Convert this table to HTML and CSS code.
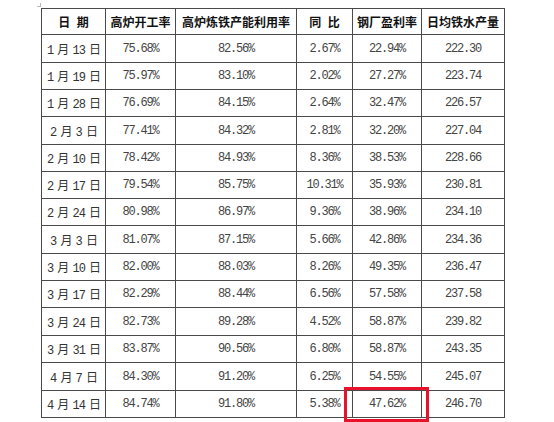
FILE: index.html
```html
<!DOCTYPE html>
<html lang="zh-CN">
<head>
<meta charset="utf-8">
<title>高炉数据</title>
<link rel="stylesheet" href="styles.css">
</head>
<body>
<div class="page">
  <div class="sheet">
    <div class="grid">
      <div class="c h sp">日 期</div><div class="c h">高炉开工率</div><div class="c h">高炉炼铁产能利用率</div><div class="c h sp">同 比</div><div class="c h">钢厂盈利率</div><div class="c h">日均铁水产量</div>

      <div class="c d">1 月 13 日</div><div class="c n">75.68%</div><div class="c n">82.56%</div><div class="c n">2.67%</div><div class="c n">22.94%</div><div class="c n">222.30</div>
      <div class="c d">1 月 19 日</div><div class="c n">75.97%</div><div class="c n">83.10%</div><div class="c n">2.02%</div><div class="c n">27.27%</div><div class="c n">223.74</div>
      <div class="c d">1 月 28 日</div><div class="c n">76.69%</div><div class="c n">84.15%</div><div class="c n">2.64%</div><div class="c n">32.47%</div><div class="c n">226.57</div>
      <div class="c d">2 月 3 日</div><div class="c n">77.41%</div><div class="c n">84.32%</div><div class="c n">2.81%</div><div class="c n">32.20%</div><div class="c n">227.04</div>
      <div class="c d">2 月 10 日</div><div class="c n">78.42%</div><div class="c n">84.93%</div><div class="c n">8.36%</div><div class="c n">38.53%</div><div class="c n">228.66</div>
      <div class="c d">2 月 17 日</div><div class="c n">79.54%</div><div class="c n">85.75%</div><div class="c n">10.31%</div><div class="c n">35.93%</div><div class="c n">230.81</div>
      <div class="c d">2 月 24 日</div><div class="c n">80.98%</div><div class="c n">86.97%</div><div class="c n">9.36%</div><div class="c n">38.96%</div><div class="c n">234.10</div>
      <div class="c d">3 月 3 日</div><div class="c n">81.07%</div><div class="c n">87.15%</div><div class="c n">5.66%</div><div class="c n">42.86%</div><div class="c n">234.36</div>
      <div class="c d">3 月 10 日</div><div class="c n">82.00%</div><div class="c n">88.03%</div><div class="c n">8.26%</div><div class="c n">49.35%</div><div class="c n">236.47</div>
      <div class="c d">3 月 17 日</div><div class="c n">82.29%</div><div class="c n">88.44%</div><div class="c n">6.56%</div><div class="c n">57.58%</div><div class="c n">237.58</div>
      <div class="c d">3 月 24 日</div><div class="c n">82.73%</div><div class="c n">89.28%</div><div class="c n">4.52%</div><div class="c n">58.87%</div><div class="c n">239.82</div>
      <div class="c d">3 月 31 日</div><div class="c n">83.87%</div><div class="c n">90.56%</div><div class="c n">6.80%</div><div class="c n">58.87%</div><div class="c n">243.35</div>
      <div class="c d">4 月 7 日</div><div class="c n">84.30%</div><div class="c n">91.20%</div><div class="c n">6.25%</div><div class="c n">54.55%</div><div class="c n">245.07</div>
      <div class="c d">4 月 14 日</div><div class="c n">84.74%</div><div class="c n">91.80%</div><div class="c n">5.38%</div><div class="c n mark">47.62%</div><div class="c n">246.70</div>
    </div>
  </div>
</div>
</body>
</html>
```

FILE: styles.css
```css
html, body {
  margin: 0;
  padding: 0;
  background: #ffffff;
}

.page {
  width: 554px;
  height: 422px;
  overflow: hidden;
  padding: 8px 0 0 41px;
  box-sizing: border-box;
}

.sheet {
  position: relative;
  display: inline-block;
}

.sheet::before {
  content: "";
  position: absolute;
  left: -4px;
  top: -5px;
  width: 3px;
  height: 3px;
  border-right: 1px solid #bbbbbb;
  border-bottom: 1px solid #bbbbbb;
}

.grid {
  display: grid;
  grid-template-columns: 63px 69px 120px 55px 68px 82px;
  grid-template-rows: 25px 27px 26px 26px 27px 26px 26px 26px 27px 26px 26px 27px 26px 27px 26px;
  gap: 1px;
  padding: 1px;
  background: #4a4a4a;
}

.c {
  background: #ffffff;
  display: flex;
  align-items: center;
  justify-content: center;
  white-space: pre;
}

.h {
  font-family: "Noto Sans CJK SC", sans-serif;
  font-weight: 700;
  font-size: 12px;
  color: #111111;
}

.sp {
  word-spacing: 4px;
}

.d {
  font-family: "Liberation Mono", "Noto Sans CJK SC", monospace;
  font-size: 12px;
  letter-spacing: -1px;
  word-spacing: -2px;
  color: #333333;
}

.n {
  font-family: "Liberation Mono", monospace;
  font-size: 12px;
  letter-spacing: -1.2px;
  color: #444444;
}

.mark {
  position: relative;
  overflow: visible;
}

.mark::after {
  content: "";
  position: absolute;
  left: -9px;
  right: -8px;
  top: -4px;
  bottom: -5px;
  border: 3px solid #e8122c;
}
```
